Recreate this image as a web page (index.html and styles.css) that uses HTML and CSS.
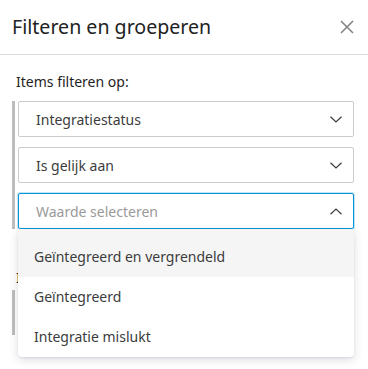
FILE: index.html
```html
<!DOCTYPE html>
<html lang="nl">
<head>
<meta charset="utf-8">
<title>Filteren en groeperen</title>
<link rel="stylesheet" href="styles.css">
</head>
<body>
<div class="panel">
  <header class="header">
    <h1 class="title">Filteren en groeperen</h1>
    <button class="close" aria-label="Sluiten">
      <svg width="14" height="14" viewBox="0 0 14 14"><path d="M1 1L13 13M13 1L1 13" stroke="#808080" stroke-width="1.5" fill="none"/></svg>
    </button>
  </header>
  <div class="content">
    <div class="label">Items filteren op:</div>
    <div class="group">
      <div class="select">
        <span class="value">Integratiestatus</span>
        <svg class="chev" width="12" height="7" viewBox="0 0 12 7"><path d="M0.5 0.8L6 6L11.5 0.8" stroke="#3c3c3c" stroke-width="1.2" fill="none"/></svg>
      </div>
      <div class="select">
        <span class="value">Is gelijk aan</span>
        <svg class="chev" width="12" height="7" viewBox="0 0 12 7"><path d="M0.5 0.8L6 6L11.5 0.8" stroke="#3c3c3c" stroke-width="1.2" fill="none"/></svg>
      </div>
      <div class="select-wrap">
        <div class="select focused">
          <span class="value placeholder">Waarde selecteren</span>
          <svg class="chev" width="12" height="7" viewBox="0 0 12 7"><path d="M0.5 6.2L6 1L11.5 6.2" stroke="#3c3c3c" stroke-width="1.2" fill="none"/></svg>
        </div>
        <ul class="menu">
          <li class="item active">Geïntegreerd en vergrendeld</li>
          <li class="item">Geïntegreerd</li>
          <li class="item">Integratie mislukt</li>
        </ul>
      </div>
    </div>
    <div class="label second">Items groeperen op:</div>
    <div class="group short">
      <div class="select">
        <span class="value">Geen</span>
      </div>
    </div>
  </div>
</div>
</body>
</html>
```
FILE: styles.css
```css
* { box-sizing: border-box; }
html, body { margin: 0; padding: 0; background: #fff; }
body { font-family: "Noto Sans", "Open Sans", sans-serif; color: #3c3c3c; }
.panel { width: 368px; height: 369px; overflow: hidden; }
.header {
  height: 55px;
  display: flex;
  align-items: center;
  justify-content: space-between;
  padding: 0 14px 1px 12px;
  border-bottom: 1px solid #dcdcdc;
}
.title { margin: 0; font-size: 19.6px; font-weight: 400; color: #222; letter-spacing: 0; }
.close { border: 0; background: none; padding: 0; width: 14px; height: 14px; display: flex; }
.content { padding: 17px 14px 0 12px; }
.label { font-size: 14px; line-height: 20px; color: #1e1e1e; padding-left: 4px; margin-bottom: 9px; }
.label.second { margin-top: 39px; margin-bottom: 2px; }
.group {
  border-left: 3px solid #bdbdbd;
  padding-left: 3px;
  display: flex;
  flex-direction: column;
  gap: 10px;
}
.group.short { height: 45px; }
.select {
  height: 36px;
  border: 1px solid #cccccc;
  border-radius: 2px;
  display: flex;
  align-items: center;
  justify-content: space-between;
  padding: 0 11px 0 17px;
  font-size: 14px;
  color: #3c3c3c;
}
.select-wrap { position: relative; }
.select.focused {
  border-color: #0696d7;
  box-shadow: 0 0 0 1px rgba(6,150,215,0.25);
}
.placeholder { color: #9a9a9a; }
.chev { display: block; }
.menu {
  position: absolute;
  top: 100%;
  left: 0;
  right: 0;
  margin: 0;
  padding: 0;
  list-style: none;
  background: #fff;
  border-radius: 0 0 4px 4px;
  box-shadow: 0 3px 10px rgba(40,50,80,0.16), 0 1px 2px rgba(0,0,0,0.08);
  z-index: 2;
}
.item { font-size: 14px; line-height: 40px; height: 40px; padding-left: 16px; color: #3c3c3c; }
.item:first-child { height: 48px; padding-top: 8px; }
.item.active { background: #f5f5f5; }
```
